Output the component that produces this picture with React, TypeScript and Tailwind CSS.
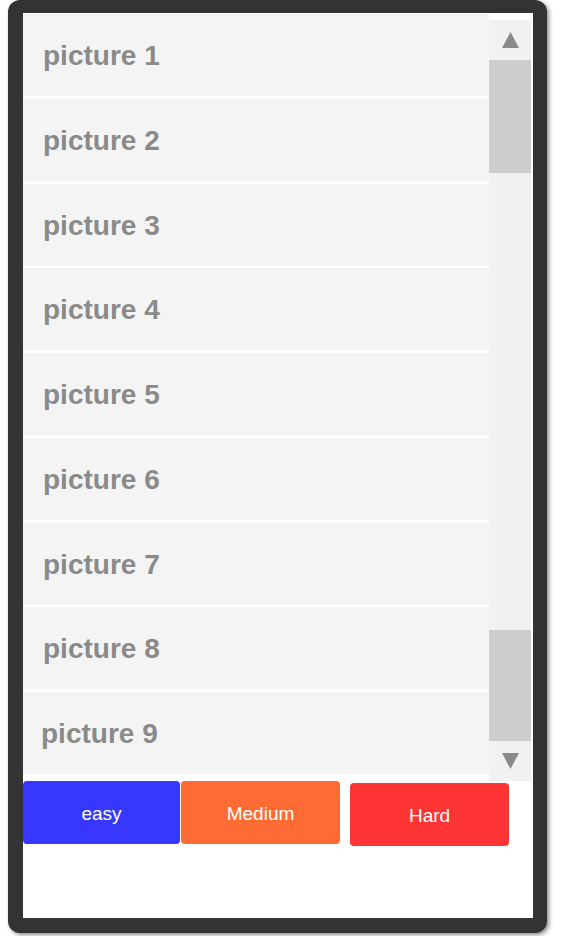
import React from "react";

const rows = ["picture 1","picture 2","picture 3","picture 4","picture 5","picture 6","picture 7","picture 8","picture 9"];

export default function App() {
  return (
    <div className="w-[562px] h-[936px] bg-white overflow-hidden" style={{ fontFamily: '"Liberation Sans", Arial, sans-serif' }}>
      <div className="ml-[8px] w-[539px] h-[933px] bg-[#333333] rounded-[12px] pt-[13px] pl-[15px] pr-[14px] pb-[15px] shadow-[2px_2px_4px_rgba(0,0,0,0.45)]">
        <div className="w-[510px] h-[905px] bg-white flex flex-col">
          <div className="flex h-[768px]">
            <div className="w-[466px] pt-[1px] flex flex-col gap-[2.75px]">
              {rows.map((r, i) => (
                <div key={r} className={`h-[82px] bg-[#f4f4f4] flex items-center pt-[2px] ${i === 8 ? "pl-[18px]" : "pl-[20px]"}`}>
                  <span className="text-[28px] font-bold text-[#8a8a8a] leading-none">{r}</span>
                </div>
              ))}
            </div>
            <div className="w-[42px] mt-[7px] h-[761px] bg-[#f1f1f1] flex flex-col">
              <div className="h-[40px] flex items-center justify-center">
                <svg width="17" height="16" viewBox="0 0 17 16"><polygon points="8.5,0 17,16 0,16" fill="#8a8a8a" /></svg>
              </div>
              <div className="h-[113px] bg-[#cdcdcd]" />
              <div className="flex-1" />
              <div className="h-[111px] bg-[#cdcdcd]" />
              <div className="h-[40px] flex items-center justify-center">
                <svg width="17" height="16" viewBox="0 0 17 16"><polygon points="0,0 17,0 8.5,16" fill="#8a8a8a" /></svg>
              </div>
            </div>
          </div>
          <div className="flex items-start">
            <button className="w-[157px] h-[63px] bg-[#3737ff] rounded-[4px] text-white text-[19px] flex items-center justify-center pt-[3px]">easy</button>
            <button className="ml-[1px] w-[159px] h-[63px] bg-[#ff6b35] rounded-[4px] text-white text-[19px] flex items-center justify-center pt-[3px]">Medium</button>
            <button className="ml-[10px] mt-[2px] w-[159px] h-[63px] bg-[#ff3535] rounded-[4px] text-white text-[19px] flex items-center justify-center pt-[3px]">Hard</button>
          </div>
        </div>
      </div>
    </div>
  );
}
